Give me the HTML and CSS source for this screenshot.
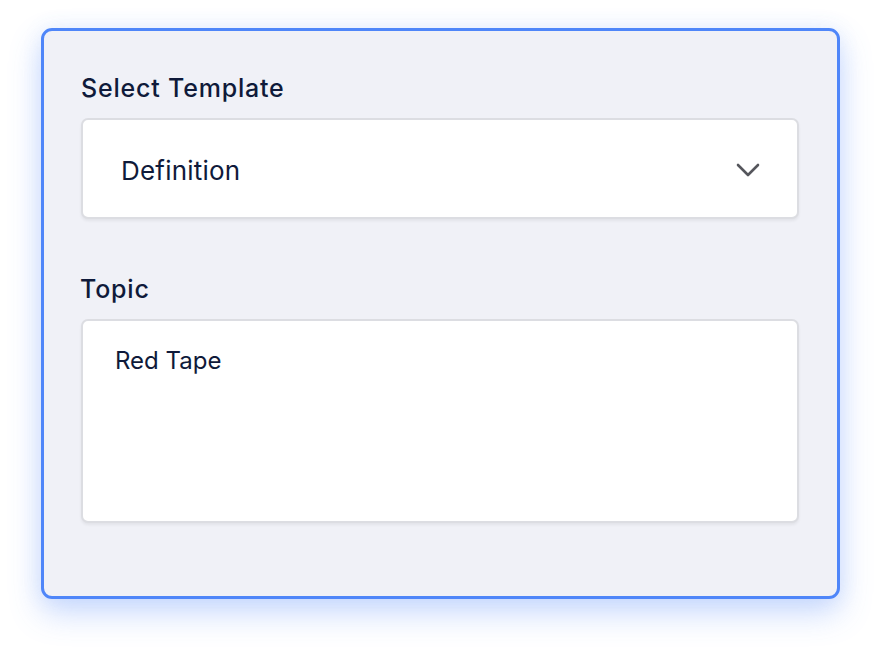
FILE: index.html
```html
<!DOCTYPE html>
<html>
<head>
<meta charset="utf-8">
<link rel="stylesheet" href="styles.css">
</head>
<body>
  <div class="card">
    <div class="field">
      <label class="label">Select Template</label>
      <div class="select">
        <span class="select-value">Definition</span>
        <svg class="chevron" width="24" height="14" viewBox="0 0 24 14" aria-hidden="true">
          <path d="M2 2 L12 12 L22 2" fill="none" stroke="#55565c" stroke-width="2.6" stroke-linecap="round" stroke-linejoin="round"/>
        </svg>
      </div>
    </div>
    <div class="field field-topic">
      <label class="label label-topic">Topic</label>
      <div class="textarea">Red Tape</div>
    </div>
  </div>
</body>
</html>
```

FILE: styles.css
```css
html, body {
  margin: 0;
  padding: 0;
  background: #ffffff;
}
html {
  height: 100%;
}
body {
  box-sizing: border-box;
  min-height: 100%;
  padding: 28px 0 0 41px;
  font-family: Inter, "Noto Sans", sans-serif;
  color: #0f1a3a;
  overflow: hidden;
}
.card {
  box-sizing: border-box;
  width: 799px;
  height: 571px;
  border: 3px solid #4f86f9;
  border-radius: 11px;
  background: #f0f1f7;
  padding: 43px 38px 0 37px;
  box-shadow: 0 14px 32px rgba(79, 134, 249, 0.30), 0 0 20px rgba(79, 134, 249, 0.10);
}
.field {
  display: flex;
  flex-direction: column;
}
.label {
  font-size: 25px;
  line-height: 29px;
  font-weight: 500;
  margin-bottom: 15px;
  letter-spacing: 0.8px;
}
.label-topic {
  margin-left: -1px;
  margin-bottom: 15px;
}
.field-topic {
  margin-top: 56px;
}
.select {
  box-sizing: border-box;
  height: 101px;
  background: #ffffff;
  border: 2px solid #dcdde2;
  border-radius: 7px;
  box-shadow: 0 2px 3px rgba(0, 0, 0, 0.06);
  display: flex;
  align-items: center;
  justify-content: space-between;
  padding: 0 37px 0 38px;
}
.select-value {
  font-size: 26px;
  line-height: 32px;
  font-weight: 400;
  margin-top: 4px;
  letter-spacing: 0.2px;
}
.chevron {
  display: block;
  margin-top: 2px;
}
.textarea {
  box-sizing: border-box;
  height: 204px;
  background: #ffffff;
  border: 2px solid #dcdde2;
  border-radius: 7px;
  box-shadow: 0 2px 3px rgba(0, 0, 0, 0.06);
  padding: 25px 32px;
  font-size: 24px;
  line-height: 29px;
  font-weight: 400;
}
```
